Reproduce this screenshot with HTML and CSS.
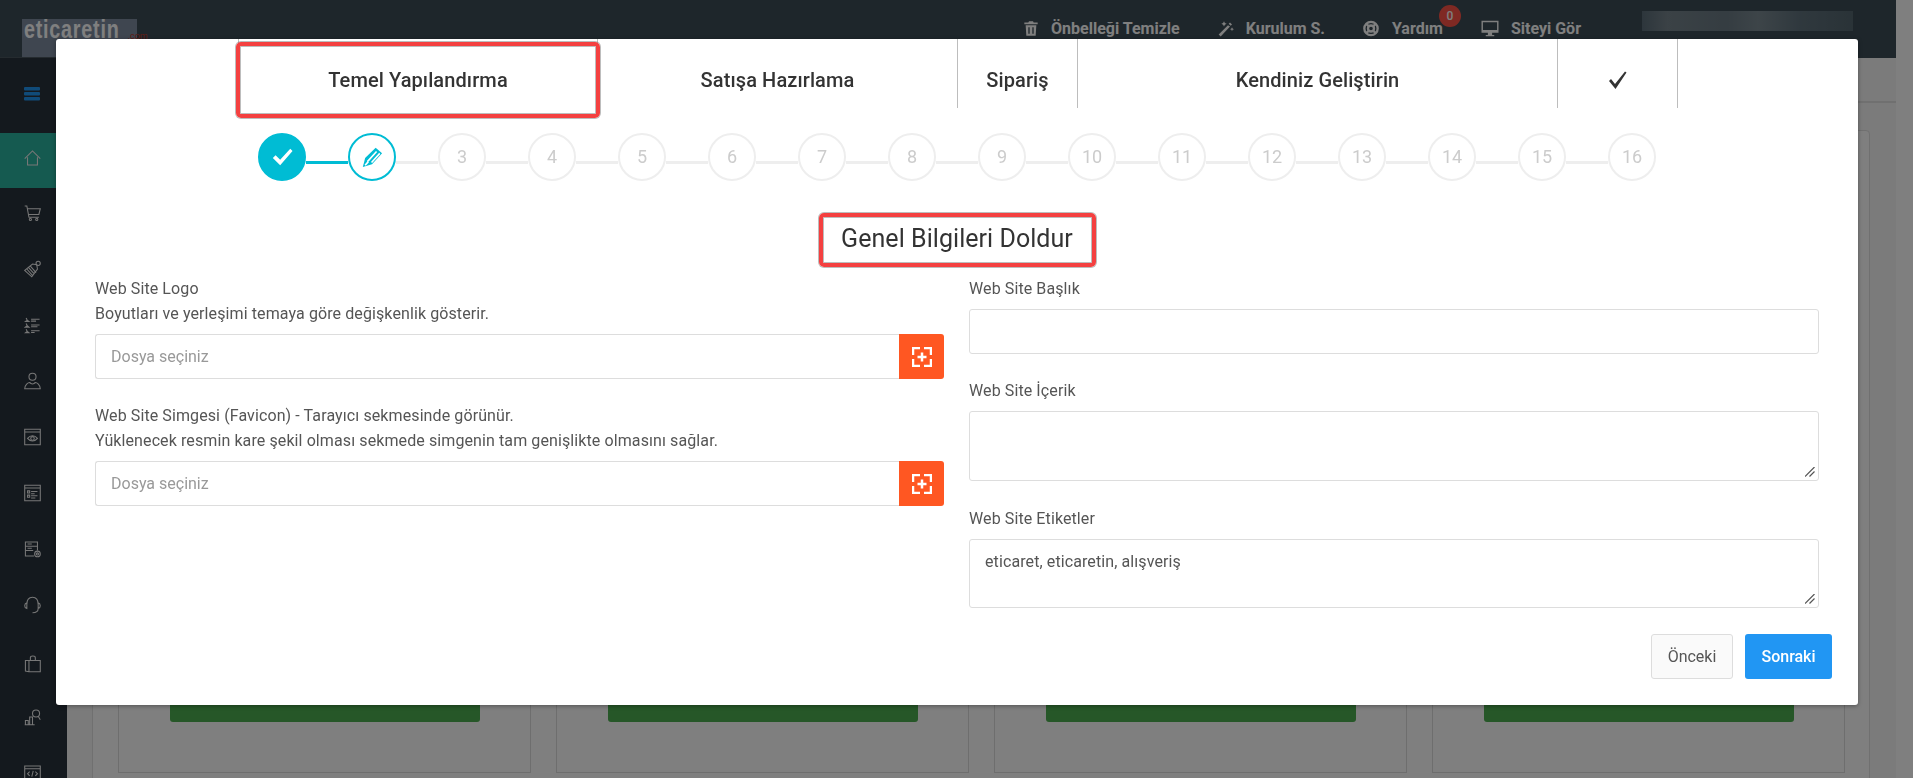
FILE: index.html
```html
<!DOCTYPE html>
<html lang="tr">
<head>
<meta charset="utf-8">
<title>Kurulum</title>
<link rel="stylesheet" href="styles.css">
</head>
<body>
<div class="page">
  <header class="topbar">
    <div class="logo"><span class="logo-text">eticaretin</span><span class="logo-tld">.com</span></div>
    <nav class="top-actions">
      <a class="top-item"><svg class="top-icon" viewBox="0 0 24 24"><path class="fill" d="M9 1h6l1 2h6v2.500H2V3h6zM4 7h16l-1 16H5zm4 3v10h2V10zm6 0v10h2V10z"/></svg>Önbelleği Temizle</a>
      <a class="top-item"><svg class="top-icon" viewBox="0 0 24 24"><path class="fill" d="M1 21 15 7l3 2L4 24zM16 5l2-2 3 3-2 2zM9 1l1.300 2.700L13 5l-2.700 1.300L9 9 7.700 6.300 5 5l2.700-1.300zM21 10l.9 2.100 2.100.9-2.100.9L21 16l-.9-2.100-2.100-.9 2.100-.9z"/></svg>Kurulum S.</a>
      <a class="top-item top-help"><svg class="top-icon" viewBox="0 0 24 24"><circle class="ring" cx="12" cy="12" r="10"/><circle class="ring" cx="12" cy="12" r="4.500"/><path class="ring" d="M5 5l4 4M19 5l-4 4M5 19l4-4M19 19l-4-4"/></svg>Yardım<span class="badge">0</span></a>
      <a class="top-item"><svg class="top-icon top-icon-wide" viewBox="0 0 24 24"><path class="fill" d="M0 1h24v17H0zm2 2v11h20V3zM9 18h6v3h3v2H6v-2h3z"/></svg>Siteyi Gör</a>
      <div class="user-blur"></div>
    </nav>
  </header>

  <aside class="sidebar">
    <div class="side-toggle"><svg class="burger" viewBox="0 0 16 14"><rect y="0" width="16" height="3.500" rx="1"/><rect y="5" width="16" height="3.500" rx="1"/><rect y="10" width="16" height="3.500" rx="1"/></svg></div>
    <div class="side-item side-active"><svg class="side-icon" viewBox="0 0 24 24"><path d="M1 13 12 2l11 11M5 11v11h14V11"/></svg></div>
    <div class="side-item"><svg class="side-icon" viewBox="0 0 24 24"><path d="M1 2h3l3 16h14M5 6h18l-2 8H6.500"/><circle cx="9" cy="21" r="1.500"/><circle cx="18" cy="21" r="1.500"/></svg></div>
    <div class="side-item"><svg class="side-icon" viewBox="0 0 24 24"><path d="M1 14 12 5l6 1 1 6-8 11zM4 12l8 9M6.500 10l8 9M9 8l8 9"/><circle cx="20" cy="4" r="3"/></svg></div>
    <div class="side-item"><svg class="side-icon" viewBox="0 0 24 24"><path d="M3 2 4.500 5 2 7h5L4.500 5zM3 10l1.500 3L2 15h5l-2.500-2zM3 18l1.500 3L2 23h5l-2.500-2zM10 4h12M10 6.500h7M10 12h12M10 14.500h9M10 20h12M10 22.500h5"/></svg></div>
    <div class="side-item"><svg class="side-icon" viewBox="0 0 24 24"><circle cx="12" cy="6" r="5"/><path d="M1 23c0-6 5-9 7-9 2 3 6 3 8 0 2 0 7 3 7 9z"/></svg></div>
    <div class="side-item"><svg class="side-icon" viewBox="0 0 24 24"><path d="M1 1h22v22H1zM1 5h22M5 14c4-5 10-5 14 0-4 5-10 5-14 0z"/><circle cx="12" cy="14" r="2.500"/></svg></div>
    <div class="side-item"><svg class="side-icon" viewBox="0 0 24 24"><path d="M1 1h22v22H1zM1 5h22M5 9h3v3H5zM5 15h3v3H5zM10 10h9M10 13h5M10 16h9M10 19h6"/></svg></div>
    <div class="side-item"><svg class="side-icon" viewBox="0 0 24 24"><path d="M14 22H2V2h17v12M2 8h17M2 14h11M5 5h6M5 11h6"/><circle cx="19" cy="19" r="4"/><circle cx="19" cy="19" r="1.500"/></svg></div>
    <div class="side-item"><svg class="side-icon" viewBox="0 0 24 24"><path d="M4 11C4 5 7 1 12 1s8 4 8 10M4 9c-4 1-4 7 0 8zM20 9c4 1 4 7 0 8zM20 17c0 4-3 6-8 6"/></svg></div>
    <div class="side-item"><svg class="side-icon side-icon-bag" viewBox="0 0 24 24"><path d="M7 23V7h16v16zM7 23l-5-1V7l5 0M9 7V3c0-3 7-3 7 0v4"/></svg></div>
    <div class="side-item"><svg class="side-icon" viewBox="0 0 24 24"><path d="M1 23h14M2 23v-6h4v6M8 23V12h4v11"/><circle cx="17" cy="7" r="5"/><path d="m20 11 3 5"/></svg></div>
    <div class="side-item"><svg class="side-icon" viewBox="0 0 24 24"><path d="M1 2h22v18H1zM1 6h22M8 10l-3 3 3 3M16 10l3 3-3 3M13 9l-2 8"/></svg></div>
  </aside>

  <main class="content">
    <div class="subbar"></div>
    <section class="panel">
      <article class="card"><div class="card-btn"></div></article>
      <article class="card"><div class="card-btn"></div></article>
      <article class="card"><div class="card-btn"></div></article>
      <article class="card"><div class="card-btn"></div></article>
    </section>
  </main>
</div>

<div class="backdrop"></div>

<div class="modal">
  <div class="tabs">
    <div class="tab tab-first">Temel Yapılandırma<span class="mark mark-tab"></span></div>
    <div class="tab">Satışa Hazırlama</div>
    <div class="tab">Sipariş</div>
    <div class="tab">Kendiniz Geliştirin</div>
    <div class="tab"><svg class="tab-check" viewBox="0 0 20 20"><path d="M1 11l2-2 4 5L17 1.500l1.500 1L7.500 19z"/></svg></div>
  </div>

  <div class="steps">
    <div class="step step-done"><svg class="step-icon" viewBox="0 0 24 24"><path d="M2 13l3-3 5 5L21 3l2.500 2.500L10 21z"/></svg></div>
    <div class="conn conn-on"></div>
    <div class="step step-current"><svg class="step-icon" viewBox="0 0 24 24"><path d="M2 23 4.500 13 16 2l7 6-11 12z"/><path class="pen-slit" d="M7 17 17 6M11.500 18 20.500 8M4.500 21l3.500-4"/></svg></div>
    <div class="conn"></div><div class="step">3</div>
    <div class="conn"></div><div class="step">4</div>
    <div class="conn"></div><div class="step">5</div>
    <div class="conn"></div><div class="step">6</div>
    <div class="conn"></div><div class="step">7</div>
    <div class="conn"></div><div class="step">8</div>
    <div class="conn"></div><div class="step">9</div>
    <div class="conn"></div><div class="step">10</div>
    <div class="conn"></div><div class="step">11</div>
    <div class="conn"></div><div class="step">12</div>
    <div class="conn"></div><div class="step">13</div>
    <div class="conn"></div><div class="step">14</div>
    <div class="conn"></div><div class="step">15</div>
    <div class="conn"></div><div class="step">16</div>
  </div>

  <div class="title-row"><h2 class="title">Genel Bilgileri Doldur<span class="mark"></span></h2></div>

  <div class="form">
    <div class="col">
      <div class="group">
        <label class="label">Web Site Logo<br>Boyutları ve yerleşimi temaya göre değişkenlik gösterir.</label>
        <div class="file">
          <div class="file-name">Dosya seçiniz</div>
          <button class="file-btn" type="button"><svg class="file-icon" viewBox="0 0 20 20"><path d="M1 8V1h7M12 1h7v7M19 12v7h-7M8 19H1v-7M10 5.500v9M5.500 10h9"/></svg></button>
        </div>
      </div>
      <div class="group">
        <label class="label">Web Site Simgesi (Favicon) - Tarayıcı sekmesinde görünür.<br>Yüklenecek resmin kare şekil olması sekmede simgenin tam genişlikte olmasını sağlar.</label>
        <div class="file">
          <div class="file-name">Dosya seçiniz</div>
          <button class="file-btn" type="button"><svg class="file-icon" viewBox="0 0 20 20"><path d="M1 8V1h7M12 1h7v7M19 12v7h-7M8 19H1v-7M10 5.500v9M5.500 10h9"/></svg></button>
        </div>
      </div>
    </div>
    <div class="col">
      <div class="group">
        <label class="label">Web Site Başlık</label>
        <input class="input" type="text">
      </div>
      <div class="group">
        <label class="label">Web Site İçerik</label>
        <div class="area-wrap">
          <textarea class="area"></textarea>
          <svg class="grip" viewBox="0 0 10 10"><path d="M0 9.500 9.500 0M4.500 9.500l5-5"/></svg>
        </div>
      </div>
      <div class="group group-last">
        <label class="label">Web Site Etiketler</label>
        <div class="area-wrap">
          <textarea class="area">eticaret, eticaretin, alışveriş</textarea>
          <svg class="grip" viewBox="0 0 10 10"><path d="M0 9.500 9.500 0M4.500 9.500l5-5"/></svg>
        </div>
      </div>
    </div>
  </div>

  <div class="actions">
    <button class="btn btn-prev" type="button">Önceki</button>
    <button class="btn btn-next" type="button">Sonraki</button>
  </div>
</div>
</body>
</html>
```

FILE: styles.css
```css
* { box-sizing: border-box; }
html, body { margin: 0; height: 100%; }
body {
  width: 1913px;
  height: 778px;
  overflow: hidden;
  background: #fff;
  font-family: Roboto, "Noto Sans", sans-serif;
  color: #555;
}

/* page behind the dialog */
.page {
  width: 1896px;
  height: 778px;
  overflow: hidden;
  display: grid;
  grid-template-columns: 67px 1fr;
  grid-template-rows: 58px 1fr;
}
.topbar {
  grid-column: 1 / 3;
  display: flex;
  align-items: flex-start;
  background: #3c4c56;
  padding: 0 43px 0 22px;
}
.logo {
  width: 115px;
  height: 40px;
  margin-top: 19px;
  background: #7e8ca0;
  color: #fff;
  white-space: nowrap;
  display: flex;
  align-items: flex-start;
  padding-left: 2px;
}
.logo-text {
  font: 700 26px/21px "Liberation Sans", sans-serif;
  display: inline-block;
  transform: scaleX(.76);
  transform-origin: 0 0;
  letter-spacing: 1px;
  margin-right: -22px;
}
.logo-tld { font-size: 9px; line-height: 34px; color: #c0392b; }
.top-actions {
  margin-left: auto;
  display: flex;
  align-items: center;
  gap: 38px;
  height: 56px;
  padding-top: 1px;
  color: #fff;
  font-size: 16px;
  font-weight: 700;
}
.top-item {
  display: flex;
  align-items: center;
  gap: 12px;
  position: relative;
  white-space: nowrap;
}
.top-icon { width: 16px; height: 17px; }
.top-icon-wide { width: 18px; }
.fill { fill: #fff; }
.ring { fill: none; stroke: #fff; stroke-width: 3.500; }
.top-help { gap: 13px; }
.badge {
  position: absolute;
  right: -18px;
  top: -14px;
  width: 22px;
  height: 22px;
  border-radius: 50%;
  background: #ff5347;
  color: #fff;
  font-size: 12px;
  font-weight: 500;
  line-height: 22px;
  text-align: center;
}
.user-blur {
  width: 211px;
  height: 20px;
  margin-left: 23px;
  margin-top: -16px;
  background: linear-gradient(90deg, #5a6c78, #76848c 12%, #6a7a84 40%, #7b8a92 55%, #5f717c 75%, #54666f);
}
.sidebar {
  background: #28323c;
  border-top: 1px solid #4a565e;
  margin-top: -1px;
  display: flex;
  flex-direction: column;
  overflow: hidden;
}
.side-toggle {
  height: 75px;
  flex: none;
  padding: 29px 0 0 24px;
}
.burger { display: block; width: 16px; height: 14px; fill: #2196f3; }
.side-item {
  height: 56px;
  flex: none;
  padding: 15px 0 0 24px;
}
.side-active { background: #2ab4a0; height: 55px; }
.side-icon {
  display: block;
  width: 17px;
  height: 20px;
  fill: none;
  stroke: #eee;
  stroke-width: 1.500;
}
.side-icon-bag { margin-top: 3px; }
.content { background: #f6f6f6; min-width: 0; padding: 0; }
.subbar { height: 45px; border-bottom: 2px solid #e0e0e0; }
.panel {
  margin: 27px 26px 0 25px;
  border: 1px solid #e0e0e0;
  border-radius: 4px;
  background: #fff;
  height: 700px;
  padding: 20px 25px 0;
  display: flex;
  gap: 25px;
}
.card {
  width: 413px;
  height: 622px;
  flex: none;
  border: 1px solid #dcdcdc;
  display: flex;
  justify-content: center;
  padding-top: 500px;
}
.card-btn {
  width: 310px;
  height: 70px;
  background: #4caf50;
  border-radius: 3px;
}
.backdrop {
  position: fixed;
  inset: 0;
  background: rgba(0, 0, 0, .5);
}

/* dialog */
.modal {
  position: absolute;
  left: 56px;
  top: 39px;
  width: 1802px;
  background: #fff;
  border-radius: 3px;
  box-shadow: 0 1px 4px rgba(0, 0, 0, .35);
  padding-bottom: 26px;
}
.tabs {
  display: grid;
  grid-template-columns: 360px 360px 120px 480px 120px;
  justify-content: center;
  height: 69px;
  padding-left: 2px;
}
.tab {
  position: relative;
  border-right: 1px solid #bdbdbd;
  padding-top: 29px;
  text-align: center;
  font-size: 20px;
  font-weight: 500;
  line-height: 24px;
  letter-spacing: .1px;
  color: #333;
}
.tab-first { border-left: 1px solid #bdbdbd; }
.tab-check {
  display: block;
  width: 20px;
  height: 20px;
  margin: 2px auto 0;
  fill: #333;
}
.mark {
  position: absolute;
  inset: 0;
  border: 4px solid #f44040;
  border-radius: 5px;
  box-shadow: 0 0 0 1px rgba(90, 90, 90, .4), inset 0 0 0 1px rgba(90, 90, 90, .4);
}
.mark-tab { inset: 3px -3px -10px -3px; }
.steps {
  display: flex;
  justify-content: center;
  margin-top: 25px;
}
.step {
  width: 48px;
  height: 48px;
  flex: none;
  border: 2px solid #eee;
  border-radius: 50%;
  background: #fff;
  color: #ccc;
  font-size: 18px;
  line-height: 42px;
  text-align: center;
  display: flex;
  align-items: center;
  justify-content: center;
}
.step-done { background: #00bcd4; border-color: #00bcd4; }
.step-done .step-icon { fill: #fff; width: 22px; height: 22px; }
.step-current { border-color: #00bcd4; }
.step-current .step-icon { fill: #00bcd4; width: 22px; height: 22px; }
.pen-slit { fill: none; stroke: #fff; stroke-width: 1.800; }
.conn {
  width: 42px;
  height: 3px;
  margin-top: 28px;
  flex: none;
  background: #eee;
}
.conn-on { background: #00bcd4; }
.title-row {
  display: flex;
  justify-content: center;
  margin-top: 32px;
}
.title {
  position: relative;
  margin: 0;
  width: 277px;
  height: 54px;
  padding-bottom: 4px;
  display: flex;
  align-items: center;
  justify-content: center;
  color: #333;
  font-size: 25px;
  font-weight: 400;
  letter-spacing: .05px;
  white-space: nowrap;
}
.form {
  display: grid;
  grid-template-columns: 849px 850px;
  column-gap: 25px;
  padding: 9px 0 0 39px;
}
.group { margin-bottom: 24px; }
.group-last { margin: 25px 0 0; }
.label {
  display: block;
  font-size: 16px;
  line-height: 25px;
  letter-spacing: .1px;
  margin-bottom: 8px;
  color: #555;
}
.file { display: flex; height: 45px; }
.file-name {
  flex: 1;
  border: 1px solid #ddd;
  border-right: 0;
  border-radius: 3px 0 0 3px;
  padding: 0 15px;
  font-size: 16px;
  line-height: 43px;
  color: #999;
}
.file-btn {
  width: 45px;
  flex: none;
  border: 0;
  border-radius: 0 3px 3px 0;
  background: #ff5722;
  padding: 0;
  display: flex;
  align-items: center;
  justify-content: center;
}
.file-icon {
  width: 20px;
  height: 20px;
  fill: none;
  stroke: #fff;
  stroke-width: 2.500;
}
.input, .area {
  display: block;
  width: 100%;
  border: 1px solid #ddd;
  border-radius: 3px;
  font: 400 16px/20px Roboto, sans-serif;
  color: #555;
  background: #fff;
  outline: 0;
  margin: 0;
}
.input { height: 45px; }
.area { height: 70px; padding: 12px 15px; resize: none; letter-spacing: .1px; }
.group-last .area { height: 69px; }
.area-wrap { position: relative; }
.grip {
  position: absolute;
  right: 4px;
  bottom: 4px;
  width: 10px;
  height: 10px;
  fill: none;
  stroke: #555;
  stroke-width: 1.200;
}
.actions {
  display: flex;
  justify-content: flex-end;
  gap: 12px;
  padding: 26px 26px 0 0;
}
.btn {
  height: 45px;
  border-radius: 3px;
  font: 400 16px Roboto, sans-serif;
  padding: 0;
}
.btn-prev {
  width: 82px;
  border: 1px solid #ddd;
  background: #fafafa;
  color: #555;
}
.btn-next {
  width: 87px;
  border: 0;
  background: #2196f3;
  color: #fff;
  font-weight: 500;
}
```
